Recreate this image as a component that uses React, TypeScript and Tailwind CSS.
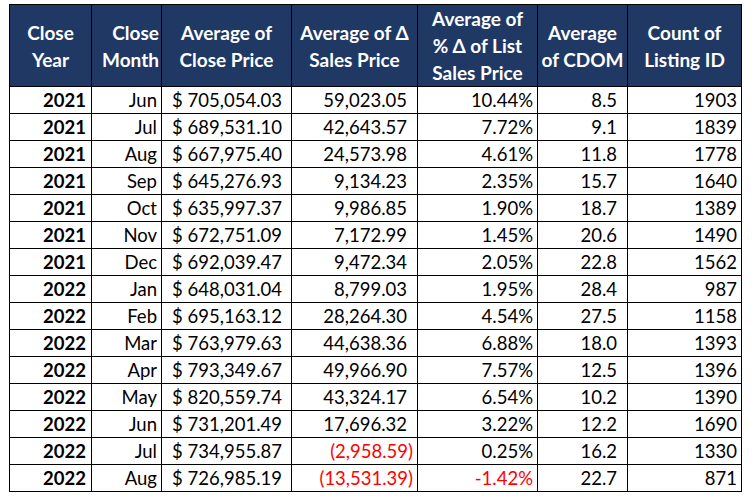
const rows: [string, string, string, string, string, string, string][] = [
  ['2021', 'Jun', '705,054.03', '59,023.05', '10.44%', '8.5', '1903'],
  ['2021', 'Jul', '689,531.10', '42,643.57', '7.72%', '9.1', '1839'],
  ['2021', 'Aug', '667,975.40', '24,573.98', '4.61%', '11.8', '1778'],
  ['2021', 'Sep', '645,276.93', '9,134.23', '2.35%', '15.7', '1640'],
  ['2021', 'Oct', '635,997.37', '9,986.85', '1.90%', '18.7', '1389'],
  ['2021', 'Nov', '672,751.09', '7,172.99', '1.45%', '20.6', '1490'],
  ['2021', 'Dec', '692,039.47', '9,472.34', '2.05%', '22.8', '1562'],
  ['2022', 'Jan', '648,031.04', '8,799.03', '1.95%', '28.4', '987'],
  ['2022', 'Feb', '695,163.12', '28,264.30', '4.54%', '27.5', '1158'],
  ['2022', 'Mar', '763,979.63', '44,638.36', '6.88%', '18.0', '1393'],
  ['2022', 'Apr', '793,349.67', '49,966.90', '7.57%', '12.5', '1396'],
  ['2022', 'May', '820,559.74', '43,324.17', '6.54%', '10.2', '1390'],
  ['2022', 'Jun', '731,201.49', '17,696.32', '3.22%', '12.2', '1690'],
  ['2022', 'Jul', '734,955.87', '(2,958.59)', '0.25%', '16.2', '1330'],
  ['2022', 'Aug', '726,985.19', '(13,531.39)', '-1.42%', '22.7', '871'],
]

const cell = 'border-r border-b border-black h-[27px] leading-[27px] whitespace-nowrap'
const head = 'border-r border-b border-black h-[82px] flex flex-col justify-center leading-[27px] font-bold text-white bg-[#1f3864] text-[19px]'

export default function App() {
  return (
    <div className="min-h-[500px] w-[756px] bg-white pt-[4px] pl-[9px]" style={{ fontFamily: 'Lato, "Liberation Sans", sans-serif' }}>
      <div className="grid w-fit grid-cols-[82px_70px_130px_126px_120px_90px_114px] border-l border-t border-black text-[18.5px] text-black">
        <div className={`${head} text-center`}>
          <span>Close</span>
          <span>Year</span>
        </div>
        <div className={`${head} text-right pr-[2px]`}>
          <span>Close</span>
          <span>Month</span>
        </div>
        <div className={`${head} text-center`}>
          <span>Average of</span>
          <span>Close Price</span>
        </div>
        <div className={`${head} text-center`}>
          <span>Average of Δ</span>
          <span>Sales Price</span>
        </div>
        <div className={`${head} text-center`}>
          <span>Average of</span>
          <span>% Δ of List</span>
          <span>Sales Price</span>
        </div>
        <div className={`${head} text-center`}>
          <span>Average</span>
          <span>of CDOM</span>
        </div>
        <div className={`${head} text-center`}>
          <span>Count of</span>
          <span>Listing ID</span>
        </div>

        {rows.map(([year, month, price, delta, pct, cdom, count], i) => {
          const neg = delta.startsWith('(')
          return (
            <div key={i} className="contents">
              <div className={`${cell} text-right pr-[5px] font-bold`}>{year}</div>
              <div className={`${cell} text-right pr-[4px]`}>{month}</div>
              <div className={`${cell} flex justify-between pl-[10px] pr-[9px]`}>
                <span>$</span>
                <span>{price}</span>
              </div>
              <div className={`${cell} text-right ${neg ? 'pr-[4px] text-[#ff0000]' : 'pr-[10px]'}`}>{delta}</div>
              <div className={`${cell} text-right pr-[4px] ${pct.startsWith('-') ? 'text-[#ff0000]' : ''}`}>{pct}</div>
              <div className={`${cell} text-right pr-[10px]`}>{cdom}</div>
              <div className={`${cell} text-right pr-[4px]`}>{count}</div>
            </div>
          )
        })}
      </div>
    </div>
  )
}
